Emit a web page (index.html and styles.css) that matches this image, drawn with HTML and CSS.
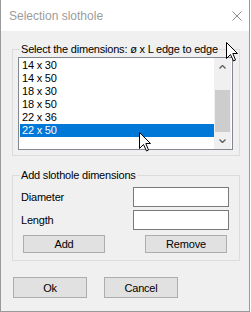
FILE: index.html
```html
<!DOCTYPE html>
<html lang="en">
<head>
    <meta charset="UTF-8">
    <title>Selection slothole</title>
    <link rel="stylesheet" href="styles.css">
</head>
<body>
    <div class="window">
        <div class="titlebar">
            <span class="title">Selection slothole</span>
            <svg class="close" width="10" height="10" viewBox="0 0 10 10">
                <path d="M0.5 0.5 L9.5 9.5 M9.5 0.5 L0.5 9.5" stroke="#8c8c8c" stroke-width="1"/>
            </svg>
        </div>

        <fieldset class="group group-list">
            <legend>Select the dimensions: ø x L edge to edge</legend>
            <div class="listbox">
                <ul class="items">
                    <li>14 x 30</li>
                    <li>14 x 50</li>
                    <li>18 x 30</li>
                    <li>18 x 50</li>
                    <li>22 x 36</li>
                    <li class="selected">22 x 50</li>
                </ul>
                <div class="scrollbar">
                    <div class="scroll-btn">
                        <svg width="7" height="4" viewBox="0 0 7 4"><path d="M0.5 3.5 L3.5 0.5 L6.5 3.5" fill="none" stroke="#606060" stroke-width="1.4"/></svg>
                    </div>
                    <div class="track"><div class="thumb"></div></div>
                    <div class="scroll-btn">
                        <svg width="7" height="4" viewBox="0 0 7 4"><path d="M0.5 0.5 L3.5 3.5 L6.5 0.5" fill="none" stroke="#606060" stroke-width="1.4"/></svg>
                    </div>
                </div>
            </div>
        </fieldset>

        <fieldset class="group group-add">
            <legend>Add slothole dimensions</legend>
            <div class="field">
                <label for="diameter">Diameter</label>
                <input id="diameter" type="text">
            </div>
            <div class="field field-second">
                <label for="length">Length</label>
                <input id="length" type="text">
            </div>
            <div class="group-buttons">
                <button type="button" class="btn btn-small">Add</button>
                <button type="button" class="btn btn-small">Remove</button>
            </div>
        </fieldset>

        <div class="dialog-buttons">
            <button type="button" class="btn btn-dialog">Ok</button>
            <button type="button" class="btn btn-dialog">Cancel</button>
        </div>

        <!-- mouse pointers captured in the screenshot -->
        <svg class="cursor cursor-top" width="13" height="21" viewBox="0 0 13 21">
            <path d="M0.5 0.5 V16.5 L4.5 12.5 L7.5 19 L9.5 18 L6.8 11.5 H11.5 Z" fill="#fff" stroke="#000"/>
        </svg>
        <svg class="cursor cursor-list" width="13" height="21" viewBox="0 0 13 21">
            <path d="M0.5 0.5 V16.5 L4.5 12.5 L7.5 19 L9.5 18 L6.8 11.5 H11.5 Z" fill="#fff" stroke="#000"/>
        </svg>
    </div>
</body>
</html>
```

FILE: styles.css
```css
body {
    margin: 0;
    background-color: #fff;
    font-family: "Liberation Sans", Arial, sans-serif;
    font-size: 11px;
    letter-spacing: -0.2px;
    color: #000;
}

.window {
    position: relative;
    box-sizing: border-box;
    width: 250px;
    height: 312px;
    background-color: #f0f0f0;
    border: 1px solid #9a9a9a;
    border-top: none;
}

.titlebar {
    height: 31px;
    background-color: #fff;
    display: flex;
    align-items: center;
    justify-content: space-between;
    padding: 0 7px 0 8px;
}
.title {
    font-size: 12px;
    letter-spacing: 0;
    color: #9c9c9c;
}
.close {
    display: block;
}

.group {
    box-sizing: border-box;
    width: 228px;
    margin: 12px 0 0 11px;
    padding: 0;
    border: 1px solid #dcdcdc;
}
.group legend {
    margin-left: 7px;
    padding: 0 1px;
    line-height: 13px;
}
.group-list {
    padding-bottom: 5px;
}
.group-add {
    margin-top: 13px;
}

.listbox {
    box-sizing: border-box;
    display: flex;
    width: 215px;
    height: 93px;
    margin: 1px 0 0 5px;
    background-color: #fff;
    border: 1px solid #828790;
}
.items {
    list-style: none;
    margin: 0;
    padding: 1px 0 0 1px;
    width: 194px;
}
.items li {
    height: 13px;
    line-height: 13px;
    padding-left: 2px;
}
.items li.selected {
    background-color: #0078d7;
    color: #fff;
}

.scrollbar {
    display: flex;
    flex-direction: column;
    width: 17px;
    margin-right: 1px;
    background-color: #f0f0f0;
}
.scroll-btn {
    height: 17px;
    display: flex;
    align-items: center;
    justify-content: center;
}
.scroll-btn svg {
    display: block;
}
.track {
    flex: 1;
    display: flex;
    flex-direction: column;
    justify-content: flex-end;
}
.thumb {
    height: 42px;
    margin: 0 1px;
    background-color: #cdcdcd;
}

.field {
    display: flex;
    align-items: center;
    justify-content: space-between;
    margin: 5px 10px 0 8px;
}
.field-second {
    margin-top: 3px;
}
.field input {
    box-sizing: border-box;
    width: 96px;
    height: 20px;
    margin: 0;
    border: 1px solid #7a7a7a;
    background-color: #fff;
}

.btn {
    box-sizing: border-box;
    margin: 0;
    padding: 0;
    font-family: inherit;
    font-size: 11px;
    letter-spacing: -0.2px;
    color: #000;
    background-color: #e1e1e1;
    border: 1px solid #adadad;
}
.group-buttons {
    display: flex;
    justify-content: space-between;
    margin: 5px 12px 7px 10px;
}
.btn-small {
    width: 82px;
    height: 18px;
}
.dialog-buttons {
    display: flex;
    gap: 17px;
    margin: 16px 0 0 12px;
}
.btn-dialog {
    width: 74px;
    height: 21px;
}

.cursor {
    position: absolute;
}
.cursor-top {
    left: 225px;
    top: 42px;
}
.cursor-list {
    left: 138px;
    top: 132px;
}
```
